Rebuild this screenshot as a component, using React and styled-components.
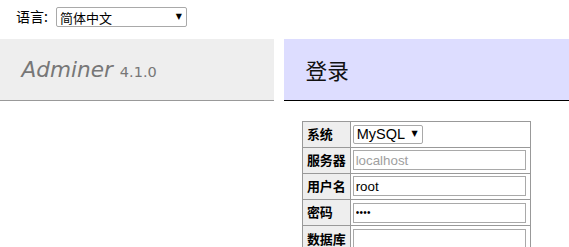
import React from 'react';
import styled, { createGlobalStyle } from 'styled-components';

const GlobalStyle = createGlobalStyle`
  body {
    margin: 0;
    background: #fff;
    color: #000;
    font: 14.4px/1.25 "DejaVu Sans", Verdana, "Noto Sans CJK SC", sans-serif;
  }
`;

function App() {
  return (
    <>
      <GlobalStyle />
      <LangBar>
        语言:
        <FakeSelect $width="131px">
          <span>简体中文</span>
          <Caret>▼</Caret>
        </FakeSelect>
      </LangBar>
      <Main>
        <Menu>
          <Title>
            Adminer <Version>4.1.0</Version>
          </Title>
        </Menu>
        <Content>
          <Heading>登录</Heading>
          <LoginTable>
            <tbody>
              <tr>
                <Th>系统</Th>
                <Td>
                  <FakeSelect $width="70px" $small>
                    <span>MySQL</span>
                    <Caret>▼</Caret>
                  </FakeSelect>
                </Td>
              </tr>
              <tr>
                <Th>服务器</Th>
                <Td><Field placeholder="localhost" /></Td>
              </tr>
              <tr>
                <Th>用户名</Th>
                <Td><Field defaultValue="root" /></Td>
              </tr>
              <tr>
                <Th>密码</Th>
                <Td><Field defaultValue="••••" $dots /></Td>
              </tr>
              <tr>
                <Th>数据库</Th>
                <Td><Field /></Td>
              </tr>
            </tbody>
          </LoginTable>
        </Content>
      </Main>
    </>
  );
}

const LangBar = styled.div`
    display: flex;
    align-items: center;
    gap: 8px;
    height: 25.9px;
    padding: 4.3px 14.4px 4.3px 16px;
    font-family: "Noto Sans CJK SC", sans-serif;
    font-size: 14px;
`;

const FakeSelect = styled.div`
    display: inline-flex;
    align-items: center;
    justify-content: space-between;
    box-sizing: border-box;
    width: ${p => p.$width};
    height: ${p => (p.$small ? '19px' : '20px')};
    padding: 0 4px 0 3px;
    border: 1px solid #a9a9a9;
    border-radius: 2px;
    background: #fff;
    font-family: ${p => (p.$small ? '"Liberation Sans", Arial' : '"Noto Sans CJK SC"')}, sans-serif;
    font-size: ${p => (p.$small ? '14.5px' : '13px')};
    line-height: 1;
    color: #000;
`;

const Caret = styled.span`
    font-family: "DejaVu Sans", sans-serif;
    font-size: 8px;
`;

const Main = styled.div`
    display: grid;
    grid-template-columns: 274px 1fr;
    gap: 10px;
    margin-top: 4.3px;
`;

const Menu = styled.div``;

const Title = styled.h1`
    margin: 0;
    padding: 17.3px 21.6px;
    height: 27px;
    font-size: 21.6px;
    line-height: 27px;
    font-weight: normal;
    font-style: italic;
    color: #777;
    background: #eee;
    border-bottom: 1px solid #999;
`;

const Version = styled.span`
    font-style: normal;
    font-size: 14.5px;
    line-height: 1;
    color: #777;
`;

const Content = styled.div``;

const Heading = styled.h2`
    margin: 0 0 20px;
    padding: 17.3px 21.6px;
    height: 27px;
    font-family: "Noto Sans CJK SC", sans-serif;
    font-size: 21.6px;
    line-height: 27px;
    font-weight: normal;
    color: #111;
    background: #ddf;
    border-bottom: 1px solid #000;
`;

const LoginTable = styled.table`
    margin: 0 0 0 18px;
    border-collapse: collapse;
    font-size: 12.96px;
`;

const Th = styled.th`
    padding: 2.6px 3.9px;
    border: 1px solid #999;
    background: #eee;
    text-align: left;
    font-family: "Noto Sans CJK SC", sans-serif;
    font-weight: bold;
    white-space: nowrap;
`;

const Td = styled.td`
    padding: 2.6px 3.9px 2.6px 2px;
    border: 1px solid #999;
`;

const Field = styled.input`
    display: block;
    box-sizing: border-box;
    width: 173px;
    height: 20px;
    margin: 0;
    padding: 1px 2px;
    border: 1px solid #a9a9a9;
    font-family: "Liberation Sans", Arial, sans-serif;
    font-size: ${p => (p.$dots ? '10px' : '13.33px')};
    letter-spacing: ${p => (p.$dots ? '0.3px' : '0')};
    color: #000;
    outline: none;

    &::placeholder {
      color: #a0a0a0;
    }
`;

export default App;
